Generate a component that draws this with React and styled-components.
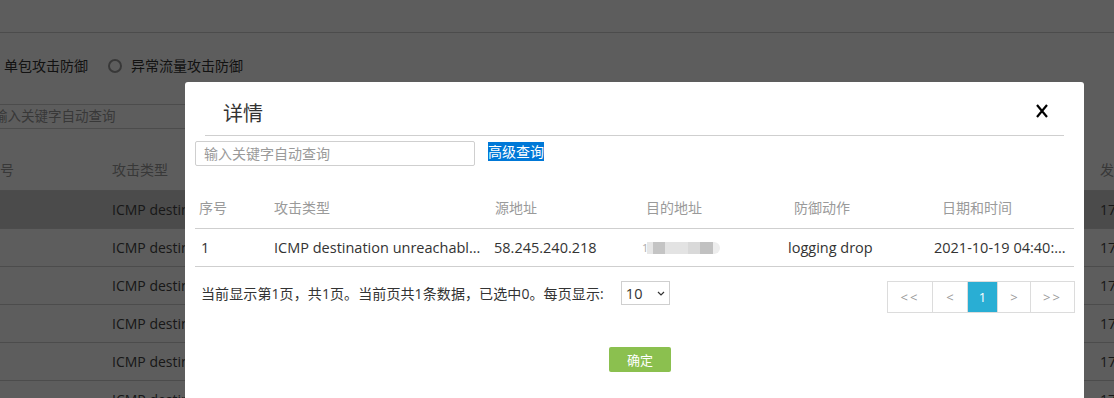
import React from "react";
import styled, { createGlobalStyle } from "styled-components";

const FONT = `"Open Sans", "Noto Sans CJK SC", sans-serif`;

const GlobalStyle = createGlobalStyle`
  html, body { margin: 0; padding: 0; background: #fff; overflow: hidden; }
  body { font-family: ${FONT}; color: #333; }
  * { box-sizing: border-box; }
`;

/* ---------- background page (under the mask) ---------- */
const BgPage = styled.div`
  width: 1400px;
  margin-left: -20px;
  font-size: 14px;
`;
const TopBar = styled.div`
  height: 33px;
  border-bottom: 1px solid #cfcfcf;
`;
const RadioRow = styled.div`
  display: flex;
  align-items: center;
  height: 18px;
  margin-top: 24px;
  padding-left: 1px;
  gap: 20px;
`;
const RadioItem = styled.label`
  display: flex;
  align-items: center;
  gap: 9px;
  color: #333;
  line-height: 18px;
`;
const RadioCircle = styled.span`
  width: 14px;
  height: 14px;
  border-radius: 50%;
  border: 2px solid #9a9a9a;
`;
const BgSearch = styled.div`
  margin: 29px 0 0 5px;
  width: 260px;
  height: 25px;
  border-top: 1px solid #cfcfcf;
  border-bottom: 1px solid #cfcfcf;
  padding-left: 9px;
  line-height: 23px;
  color: #9a9a9a;
  font-size: 13.5px;
`;
const BgTable = styled.div`
  margin-top: 18px;
`;
const BgRow = styled.div`
  display: grid;
  grid-template-columns: 126px 988px 200px;
  height: ${(p) => (p.$head ? "44px" : "38px")};
  align-items: center;
  border-bottom: 1px solid #cfcfcf;
  background: ${(p) => (p.$active ? "#cdcdcd" : "transparent")};
  color: ${(p) => (p.$head ? "#999" : "#444")};
`;
const BgCell = styled.div`
  padding-left: 6px;
  white-space: nowrap;
  overflow: hidden;
`;

/* ---------- mask + dialog ---------- */
const Mask = styled.div`
  position: fixed;
  inset: 0;
  background: rgba(0, 0, 0, 0.635);
  z-index: 10;
`;
const Dialog = styled.div`
  position: absolute;
  left: 185px;
  top: 82px;
  width: 899px;
  height: 340px;
  padding: 0 10px;
  background: #fff;
  border-radius: 3px;
  display: flex;
  flex-direction: column;
`;
const DialogHeader = styled.div`
  margin: 0 10px;
  height: 54px;
  padding-top: 10px;
  padding-left: 18px;
  padding-right: 16px;
  border-bottom: 1px solid #cfcfcf;
  display: flex;
  align-items: center;
  justify-content: space-between;
`;
const Title = styled.h2`
  margin: 0;
  font-size: 20px;
  font-weight: 400;
  color: #333;
  line-height: 26px;
`;
const CloseButton = styled.button`
  border: 0;
  background: none;
  padding: 0;
  width: 12px;
  height: 14px;
  margin-top: -6px;
  display: flex;
  cursor: pointer;
`;
const SearchRow = styled.div`
  display: flex;
  align-items: flex-start;
  gap: 13px;
  margin-top: 5px;
`;
const SearchInput = styled.input`
  width: 280px;
  height: 25px;
  border: 1px solid #cfcfcf;
  border-radius: 2px;
  padding: 0 8px;
  font-family: ${FONT};
  font-size: 14px;
  color: #333;
  outline: none;
  &::placeholder { color: #9a9a9a; }
`;
const AdvLink = styled.span`
  margin-top: 1px;
  font-size: 14px;
  line-height: 19px;
  background: #0078d7;
  color: #fff;
  cursor: pointer;
`;
const Table = styled.div`
  margin-top: 19px;
`;
const Row = styled.div`
  display: grid;
  grid-template-columns: ${(p) => p.$cols};
  height: ${(p) => (p.$head ? "44px" : "38px")};
  align-items: center;
  border-bottom: 1px solid #cfcfcf;
`;
const HeadCell = styled.div`
  padding-left: ${(p) => p.$pad}px;
  color: #9a9a9a;
  font-size: 14px;
  white-space: nowrap;
`;
const DataCell = styled.div`
  padding-left: ${(p) => p.$pad}px;
  color: #333;
  font-size: 14.5px;
  white-space: nowrap;
  display: flex;
  align-items: center;
`;
const Mosaic = styled.div`
  display: flex;
  align-items: center;
  height: 12px;
`;
const MosaicLead = styled.span`
  font-size: 11px;
  color: #aaa;
  width: 5px;
  overflow: hidden;
`;
const MosaicCell = styled.span`
  width: ${(p) => p.$w}px;
  height: 12px;
  background: ${(p) => p.$c};
  &:last-child { border-radius: 0 6px 6px 0; }
`;
const Footer = styled.div`
  margin-top: 14px;
  display: flex;
  justify-content: space-between;
  align-items: flex-start;
`;
const FooterInfo = styled.div`
  display: flex;
  align-items: center;
  height: 24px;
  padding-left: 6px;
  gap: 17px;
  font-size: 14px;
  letter-spacing: 0.1px;
  color: #333;
`;
const PageSize = styled.div`
  width: 49px;
  height: 24px;
  border: 1px solid #cfcfcf;
  display: flex;
  align-items: center;
  justify-content: space-between;
  padding: 0 4px 0 4px;
  font-size: 14.5px;
  color: #333;
`;
const Pager = styled.div`
  display: flex;
  height: 32px;
  border: 1px solid #dcdcdc;
  margin-right: -1px;
`;
const PageItem = styled.span`
  width: ${(p) => p.$w}px;
  display: flex;
  align-items: center;
  justify-content: center;
  font-size: 13px;
  letter-spacing: ${(p) => (p.$wide ? "2px" : "0")};
  color: ${(p) => (p.$active ? "#fff" : "#9a9a9a")};
  background: ${(p) => (p.$active ? "#29aed4" : "#fff")};
  & + & { border-left: 1px solid #dcdcdc; }
`;
const Actions = styled.div`
  margin-top: 34px;
  display: flex;
  justify-content: center;
  padding-left: 11px;
`;
const OkButton = styled.button`
  width: 62px;
  height: 25px;
  border: 0;
  border-radius: 2px;
  background: #8bc04f;
  color: #fff;
  font-family: ${FONT};
  font-size: 13px;
  cursor: pointer;
`;

const columns = [
  { w: 75, h: "序号", hp: 4, d: "1", dp: 6 },
  { w: 220, h: "攻击类型", hp: 4, d: "ICMP destination unreachabl...", dp: 4 },
  { w: 150, h: "源地址", hp: 5, d: "58.245.240.218", dp: 4 },
  { w: 146, h: "目的地址", hp: 6, d: "mosaic", dp: 2 },
  { w: 146, h: "防御动作", hp: 8, d: "logging drop", dp: 2 },
  { w: 142, h: "日期和时间", hp: 10, d: "2021-10-19 04:40:...", dp: 2 },
];
const gridCols = columns.map((c) => `${c.w}px`).join(" ");

const mosaic = [
  { w: 6, c: "#e6e6e6" },
  { w: 12, c: "#c4c4c4" },
  { w: 23, c: "#e3e3e3" },
  { w: 12, c: "#d9d9d9" },
  { w: 13, c: "#c1c1c1" },
  { w: 7, c: "#ededed" },
];

const pages = [
  { t: "<<", w: 44, wide: true },
  { t: "<", w: 35 },
  { t: "1", w: 30, active: true },
  { t: ">", w: 33 },
  { t: ">>", w: 44, wide: true },
];

const bgRows = [0, 1, 2, 3, 4, 5];

export default function App() {
  return (
    <>
      <GlobalStyle />
      <BgPage>
        <TopBar />
        <RadioRow>
          <RadioItem>
            <RadioCircle />
            单包攻击防御
          </RadioItem>
          <RadioItem>
            <RadioCircle />
            异常流量攻击防御
          </RadioItem>
        </RadioRow>
        <BgSearch>输入关键字自动查询</BgSearch>
        <BgTable>
          <BgRow $head>
            <BgCell>序号</BgCell>
            <BgCell>攻击类型</BgCell>
            <BgCell>发生时间</BgCell>
          </BgRow>
          {bgRows.map((i) => (
            <BgRow key={i} $active={i === 0}>
              <BgCell>{i + 1}</BgCell>
              <BgCell>ICMP destination unreachable</BgCell>
              <BgCell>172.16.0.10</BgCell>
            </BgRow>
          ))}
        </BgTable>
      </BgPage>

      <Mask>
        <Dialog>
          <DialogHeader>
            <Title>详情</Title>
            <CloseButton aria-label="close">
              <svg width="12" height="14" viewBox="0 0 12 14">
                <path d="M1 1 L11 13 M11 1 L1 13" stroke="#000" strokeWidth="2.2" fill="none" />
              </svg>
            </CloseButton>
          </DialogHeader>
          <SearchRow>
            <SearchInput placeholder="输入关键字自动查询" />
            <AdvLink>高级查询</AdvLink>
          </SearchRow>
          <Table>
            <Row $cols={gridCols} $head>
              {columns.map((c) => (
                <HeadCell key={c.h} $pad={c.hp}>
                  {c.h}
                </HeadCell>
              ))}
            </Row>
            <Row $cols={gridCols}>
              {columns.map((c) => (
                <DataCell key={c.h} $pad={c.dp}>
                  {c.d === "mosaic" ? (
                    <Mosaic>
                      <MosaicLead>1</MosaicLead>
                      {mosaic.map((m, i) => (
                        <MosaicCell key={i} $w={m.w} $c={m.c} />
                      ))}
                    </Mosaic>
                  ) : (
                    c.d
                  )}
                </DataCell>
              ))}
            </Row>
          </Table>
          <Footer>
            <FooterInfo>
              当前显示第1页，共1页。当前页共1条数据，已选中0。每页显示:
              <PageSize>
                10
                <svg width="8" height="5" viewBox="0 0 8 5">
                  <path d="M1 1 L4 4 L7 1" stroke="#333" strokeWidth="1.2" fill="none" />
                </svg>
              </PageSize>
            </FooterInfo>
            <Pager>
              {pages.map((p) => (
                <PageItem key={p.t} $w={p.w} $active={p.active} $wide={p.wide}>
                  {p.t}
                </PageItem>
              ))}
            </Pager>
          </Footer>
          <Actions>
            <OkButton>确定</OkButton>
          </Actions>
        </Dialog>
      </Mask>
    </>
  );
}
